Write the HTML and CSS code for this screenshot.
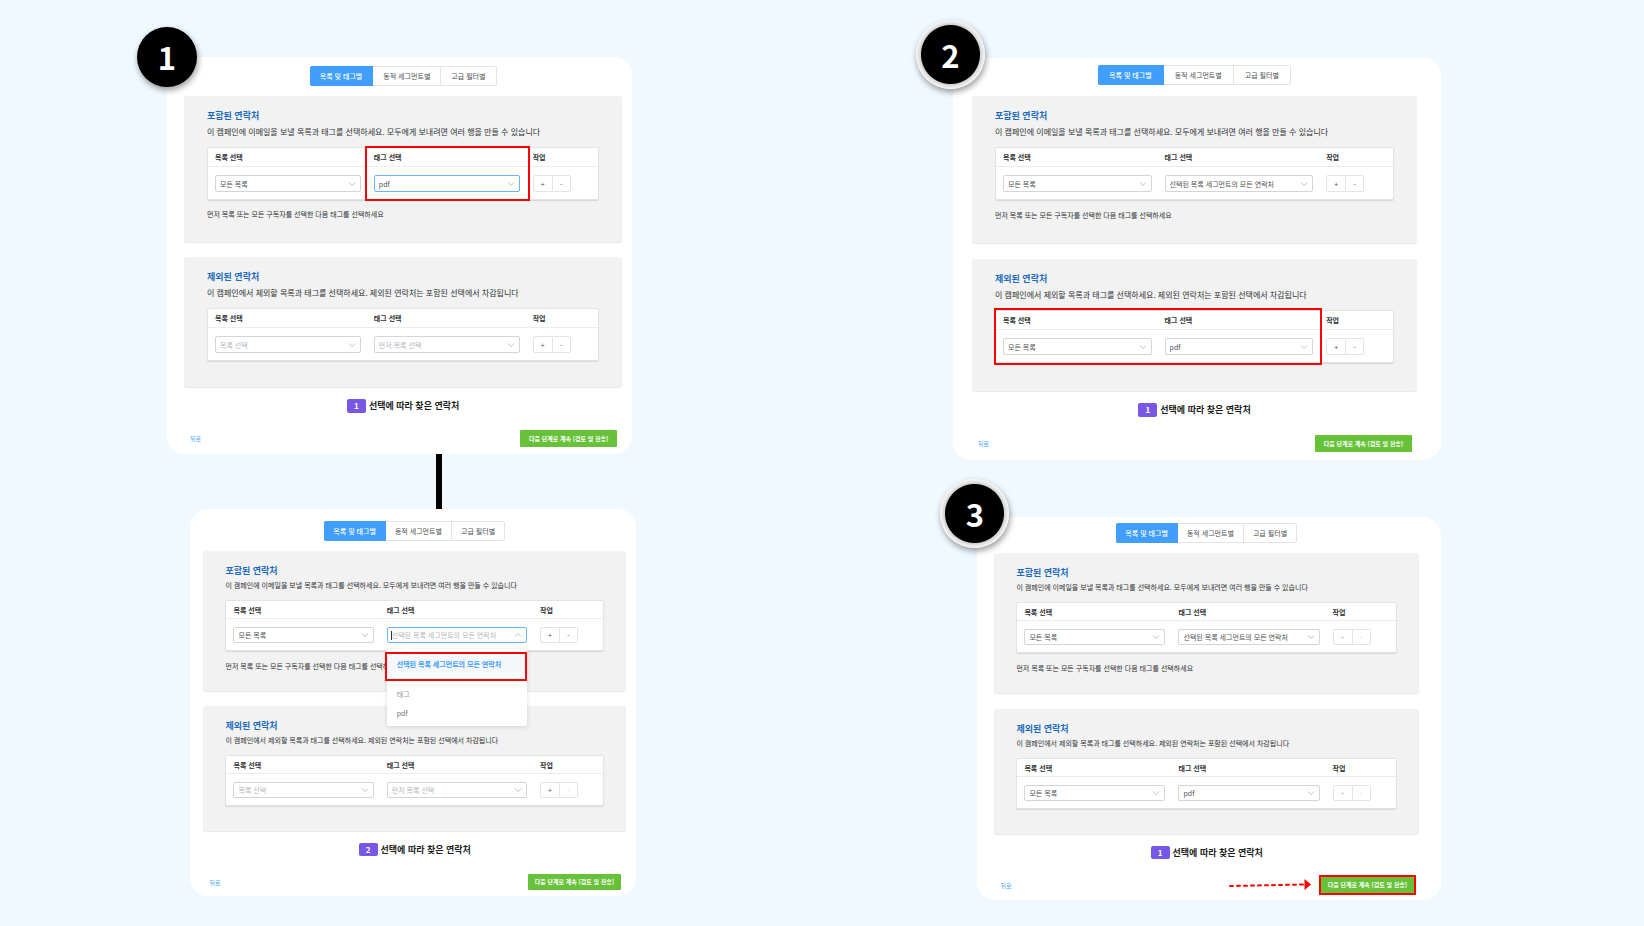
FILE: index.html
```html
<!DOCTYPE html>
<html lang="ko">
<head>
<meta charset="utf-8">
<meta name="viewport" content="width=device-width, initial-scale=1">
<title>연락처 선택 단계</title>
<link rel="stylesheet" href="styles.css">
</head>
<body>
<svg class="defs" aria-hidden="true">
  <symbol id="chev" viewBox="0 0 8 8"><path d="M1 2.500 4 5.500 7 2.500" fill="none" stroke="currentColor" stroke-width="0.8"/></symbol>
</svg>
<main class="board">
  <div class="column column--left">

    <section class="card card--one">
      <div class="step step--plain">1</div>
      <div class="tabs">
        <button class="tab tab--active" type="button">목록 및 태그별</button>
        <button class="tab" type="button">동적 세그먼트별</button>
        <button class="tab" type="button">고급 필터별</button>
      </div>
      <div class="panel">
        <h2 class="panel-title">포함된 연락처</h2>
        <p class="desc">이 캠페인에 이메일을 보낼 목록과 태그를 선택하세요. 모두에게 보내려면 여러 행을 만들 수 있습니다</p>
        <div class="table-wrap">
          <table class="grid">
            <thead><tr><th class="col">목록 선택</th><th class="col">태그 선택</th><th>작업</th></tr></thead>
            <tbody><tr>
              <td><div class="field"><select class="control" aria-label="목록 선택"><option>모든 목록</option></select><svg class="chev"><use href="#chev"/></svg></div></td>
              <td><div class="field"><select class="control control--focus" aria-label="태그 선택"><option>pdf</option></select><svg class="chev"><use href="#chev"/></svg></div></td>
              <td><div class="actions"><button class="act" type="button">+</button><button class="act" type="button">-</button></div></td>
            </tr></tbody>
          </table>
          <div class="mark mark--tag"></div>
        </div>
        <p class="note">먼저 목록 또는 모든 구독자를 선택한 다음 태그를 선택하세요</p>
      </div>
      <div class="panel panel--exclude">
        <h2 class="panel-title">제외된 연락처</h2>
        <p class="desc">이 캠페인에서 제외할 목록과 태그를 선택하세요. 제외된 연락처는 포함된 선택에서 차감됩니다</p>
        <div class="table-wrap">
          <table class="grid">
            <thead><tr><th class="col">목록 선택</th><th class="col">태그 선택</th><th>작업</th></tr></thead>
            <tbody><tr>
              <td><div class="field"><select class="control control--empty" aria-label="목록 선택"><option>목록 선택</option></select><svg class="chev"><use href="#chev"/></svg></div></td>
              <td><div class="field"><select class="control control--empty" aria-label="태그 선택"><option>먼저 목록 선택</option></select><svg class="chev"><use href="#chev"/></svg></div></td>
              <td><div class="actions"><button class="act" type="button">+</button><button class="act" type="button">-</button></div></td>
            </tr></tbody>
          </table>
        </div>
      </div>
      <p class="count"><span class="badge">1</span>선택에 따라 찾은 연락처</p>
      <div class="footer"><a class="back" href="#">뒤로</a><button class="next" type="button">다음 단계로 계속 [검토 및 전송]</button></div>
    </section>

    <div class="connector"></div>

    <section class="card card--compact card--open">
      <div class="tabs">
        <button class="tab tab--active" type="button">목록 및 태그별</button>
        <button class="tab" type="button">동적 세그먼트별</button>
        <button class="tab" type="button">고급 필터별</button>
      </div>
      <div class="panel">
        <h2 class="panel-title">포함된 연락처</h2>
        <p class="desc">이 캠페인에 이메일을 보낼 목록과 태그를 선택하세요. 모두에게 보내려면 여러 행을 만들 수 있습니다</p>
        <div class="table-wrap">
          <table class="grid">
            <thead><tr><th class="col">목록 선택</th><th class="col">태그 선택</th><th>작업</th></tr></thead>
            <tbody><tr>
              <td><div class="field"><select class="control" aria-label="목록 선택"><option>모든 목록</option></select><svg class="chev"><use href="#chev"/></svg></div></td>
              <td>
                <div class="field">
                  <input class="control control--focus" type="text" role="combobox" aria-expanded="true" aria-label="태그 선택" placeholder="선택된 목록 세그먼트의 모든 연락처">
                  <span class="caret"></span>
                  <svg class="chev chev--up"><use href="#chev"/></svg>
                  <div class="menu">
                    <button class="option option--active" type="button">선택된 목록 세그먼트의 모든 연락처</button>
                    <div class="menu-group">태그</div>
                    <button class="option" type="button">pdf</button>
                    <div class="mark mark--option"></div>
                  </div>
                </div>
              </td>
              <td><div class="actions"><button class="act" type="button">+</button><button class="act" type="button">-</button></div></td>
            </tr></tbody>
          </table>
        </div>
        <p class="note">먼저 목록 또는 모든 구독자를 선택한 다음 태그를 선택하세요</p>
      </div>
      <div class="panel panel--exclude">
        <h2 class="panel-title">제외된 연락처</h2>
        <p class="desc">이 캠페인에서 제외할 목록과 태그를 선택하세요. 제외된 연락처는 포함된 선택에서 차감됩니다</p>
        <div class="table-wrap">
          <table class="grid">
            <thead><tr><th class="col">목록 선택</th><th class="col">태그 선택</th><th>작업</th></tr></thead>
            <tbody><tr>
              <td><div class="field"><select class="control control--empty" aria-label="목록 선택"><option>목록 선택</option></select><svg class="chev"><use href="#chev"/></svg></div></td>
              <td><div class="field"><select class="control control--empty" aria-label="태그 선택"><option>먼저 목록 선택</option></select><svg class="chev"><use href="#chev"/></svg></div></td>
              <td><div class="actions"><button class="act" type="button">+</button><button class="act act--faint" type="button">-</button></div></td>
            </tr></tbody>
          </table>
        </div>
      </div>
      <p class="count"><span class="badge">2</span>선택에 따라 찾은 연락처</p>
      <div class="footer"><a class="back" href="#">뒤로</a><button class="next" type="button">다음 단계로 계속 [검토 및 전송]</button></div>
    </section>
  </div>

  <div class="column column--right">
    <section class="card card--two">
      <div class="step">2</div>
      <div class="tabs">
        <button class="tab tab--active" type="button">목록 및 태그별</button>
        <button class="tab" type="button">동적 세그먼트별</button>
        <button class="tab" type="button">고급 필터별</button>
      </div>
      <div class="panel">
        <h2 class="panel-title">포함된 연락처</h2>
        <p class="desc">이 캠페인에 이메일을 보낼 목록과 태그를 선택하세요. 모두에게 보내려면 여러 행을 만들 수 있습니다</p>
        <div class="table-wrap">
          <table class="grid">
            <thead><tr><th class="col">목록 선택</th><th class="col">태그 선택</th><th>작업</th></tr></thead>
            <tbody><tr>
              <td><div class="field"><select class="control" aria-label="목록 선택"><option>모든 목록</option></select><svg class="chev"><use href="#chev"/></svg></div></td>
              <td><div class="field"><select class="control" aria-label="태그 선택"><option>선택된 목록 세그먼트의 모든 연락처</option></select><svg class="chev"><use href="#chev"/></svg></div></td>
              <td><div class="actions"><button class="act" type="button">+</button><button class="act" type="button">-</button></div></td>
            </tr></tbody>
          </table>
        </div>
        <p class="note">먼저 목록 또는 모든 구독자를 선택한 다음 태그를 선택하세요</p>
      </div>
      <div class="panel panel--exclude">
        <h2 class="panel-title">제외된 연락처</h2>
        <p class="desc">이 캠페인에서 제외할 목록과 태그를 선택하세요. 제외된 연락처는 포함된 선택에서 차감됩니다</p>
        <div class="table-wrap">
          <table class="grid">
            <thead><tr><th class="col">목록 선택</th><th class="col">태그 선택</th><th>작업</th></tr></thead>
            <tbody><tr>
              <td><div class="field"><select class="control" aria-label="목록 선택"><option>모든 목록</option></select><svg class="chev"><use href="#chev"/></svg></div></td>
              <td><div class="field"><select class="control" aria-label="태그 선택"><option>pdf</option></select><svg class="chev"><use href="#chev"/></svg></div></td>
              <td><div class="actions"><button class="act" type="button">+</button><button class="act" type="button">-</button></div></td>
            </tr></tbody>
          </table>
          <div class="mark mark--both"></div>
        </div>
      </div>
      <p class="count"><span class="badge">1</span>선택에 따라 찾은 연락처</p>
      <div class="footer"><a class="back" href="#">뒤로</a><button class="next" type="button">다음 단계로 계속 [검토 및 전송]</button></div>
    </section>

    <section class="card card--compact card--three">
      <div class="step">3</div>
      <div class="tabs">
        <button class="tab tab--active" type="button">목록 및 태그별</button>
        <button class="tab" type="button">동적 세그먼트별</button>
        <button class="tab" type="button">고급 필터별</button>
      </div>
      <div class="panel">
        <h2 class="panel-title">포함된 연락처</h2>
        <p class="desc">이 캠페인에 이메일을 보낼 목록과 태그를 선택하세요. 모두에게 보내려면 여러 행을 만들 수 있습니다</p>
        <div class="table-wrap">
          <table class="grid">
            <thead><tr><th class="col">목록 선택</th><th class="col">태그 선택</th><th>작업</th></tr></thead>
            <tbody><tr>
              <td><div class="field"><select class="control" aria-label="목록 선택"><option>모든 목록</option></select><svg class="chev"><use href="#chev"/></svg></div></td>
              <td><div class="field"><select class="control" aria-label="태그 선택"><option>선택된 목록 세그먼트의 모든 연락처</option></select><svg class="chev"><use href="#chev"/></svg></div></td>
              <td><div class="actions"><button class="act act--faint" type="button">+</button><button class="act act--faint" type="button">-</button></div></td>
            </tr></tbody>
          </table>
        </div>
        <p class="note">먼저 목록 또는 모든 구독자를 선택한 다음 태그를 선택하세요</p>
      </div>
      <div class="panel panel--exclude">
        <h2 class="panel-title">제외된 연락처</h2>
        <p class="desc">이 캠페인에서 제외할 목록과 태그를 선택하세요. 제외된 연락처는 포함된 선택에서 차감됩니다</p>
        <div class="table-wrap">
          <table class="grid">
            <thead><tr><th class="col">목록 선택</th><th class="col">태그 선택</th><th>작업</th></tr></thead>
            <tbody><tr>
              <td><div class="field"><select class="control" aria-label="목록 선택"><option>모든 목록</option></select><svg class="chev"><use href="#chev"/></svg></div></td>
              <td><div class="field"><select class="control" aria-label="태그 선택"><option>pdf</option></select><svg class="chev"><use href="#chev"/></svg></div></td>
              <td><div class="actions"><button class="act act--faint" type="button">+</button><button class="act act--faint" type="button">-</button></div></td>
            </tr></tbody>
          </table>
        </div>
      </div>
      <p class="count"><span class="badge">1</span>선택에 따라 찾은 연락처</p>
      <div class="footer">
        <a class="back" href="#">뒤로</a>
        <svg class="arrow" viewBox="0 0 82 12" aria-hidden="true">
          <path d="M1 7 75 5.500" fill="none" stroke="#f00" stroke-width="2" stroke-linecap="round" stroke-dasharray="3 4"/>
          <path d="M75.500 0 82 5.500 75.500 11z" fill="#f00"/>
        </svg>
        <div class="next-wrap"><button class="next" type="button">다음 단계로 계속 [검토 및 전송]</button><div class="mark mark--next"></div></div>
      </div>
    </section>
  </div>
</main>
</body>
</html>
```

FILE: styles.css
```css
* { box-sizing: border-box; }

body {
  margin: 0;
  min-height: 100vh;
  background: #f0f9ff;
  color: #303133;
  font-family: "Noto Sans CJK KR", sans-serif;
  font-size: 7px;
}

h2, p { margin: 0; }
button, select, input { font: inherit; margin: 0; }
.defs { position: absolute; width: 0; height: 0; }

.board {
  display: grid;
  grid-template-columns: 167fr 469fr 317fr 488fr 203fr;
  padding: 57px 0 24px;
}

.column { display: flex; flex-direction: column; min-width: 0; }
.column--left { grid-column: 2; }
.column--right { grid-column: 4; padding-top: 1px; gap: 57px; }

.connector {
  width: 6px;
  height: 55px;
  margin-left: 57.400%;
  background: #000;
}

/* Cards */
.card {
  --title-line: 16px;
  --line: 15px;
  --table-gap: 8px;
  --note-gap: 7px;
  --head: 19px;
  --control: 17px;
  --badge: 14px;
  position: relative;
  display: flex;
  flex-direction: column;
  border-radius: 18px;
  background: #fff;
}
.card--one { width: 99.200%; padding: 9px 10px 7px 17px; }
.card--one .footer { margin-top: 17px; }
.card--two {
  --note-gap: 8px;
  padding: 7px 24px 8px 19px;
}
.card--compact {
  --title-line: 15px;
  --line: 14px;
  --note-gap: 8px;
  --head: 18px;
  --control: 16px;
  --badge: 13px;
  width: 95%;
  align-self: flex-end;
}
.card--open { padding: 12px 10px 6px 13px; }
.card--three { padding: 6px 22px 7px 17px; }

.step {
  position: absolute;
  top: -38px;
  left: -37px;
  width: 69px;
  height: 69px;
  display: grid;
  place-items: center;
  padding-bottom: 1px;
  border-radius: 50%;
  background: radial-gradient(circle closest-side, #000 0 29px, #d2d2d2 30px, #e6e6e6 32px, #f4f4f4 34px);
  box-shadow: 1px 3px 6px rgba(0, 0, 0, 0.4);
  color: #fff;
  font-size: 31px;
  font-weight: 700;
  line-height: 1;
}
.step--plain {
  top: -30px;
  left: -30px;
  width: 60px;
  height: 60px;
  background: #000;
}

/* Tabs */
.tabs { display: flex; justify-content: center; margin-bottom: 10px; }
.card--two .tabs { margin-bottom: 11px; }
.tab {
  height: 20px;
  padding: 0 10px;
  border: 1px solid #e2e4e9;
  border-left: 0;
  background: #fff;
  color: #505256;
  line-height: 18px;
  white-space: nowrap;
}
.card--two .tab { padding: 0 11px; }
.card--compact .tab { padding: 0 9px; }
.tab:last-child { border-radius: 0 2px 2px 0; }
.tab--active {
  border-color: #409eff;
  border-radius: 2px 0 0 2px;
  background: #409eff;
  color: #fff;
  font-weight: 500;
}

/* Panels */
.panel {
  padding: 12px 23px 20px;
  border-radius: 3px;
  background: #f2f2f2;
  box-shadow: 0 1px 1px #e8e8e8;
}
.panel--exclude { margin-top: 15px; padding-bottom: 26px; }
.card--two .panel--exclude { margin-top: 16px; padding-bottom: 28px; }
.card--compact .panel { padding: 12px 22px 18px; }
.card--compact .panel--exclude { padding-bottom: 25px; }
.card--three .panel--exclude { margin-top: 16px; }

.panel-title {
  color: #1c6bbf;
  font-size: 9px;
  font-weight: 700;
  line-height: var(--title-line);
}
.desc { font-size: 8px; line-height: var(--line); white-space: nowrap; }
.card--compact .desc { font-size: 7px; }
.note { margin-top: var(--note-gap); line-height: var(--line); white-space: nowrap; }

/* Table */
.table-wrap { position: relative; margin-top: var(--table-gap); }
.grid {
  width: 100%;
  table-layout: fixed;
  border-collapse: separate;
  border-spacing: 0;
  border: 1px solid #e2e3e6;
  border-radius: 2px;
  background: #fff;
  box-shadow: 0 1px 1px #d8d8d8;
}
.col { width: 40.700%; }
.grid th {
  height: var(--head);
  padding: 0 7px;
  border-bottom: 1px solid #ebeced;
  font-weight: 700;
  line-height: 12px;
  text-align: left;
}
.grid td { padding: 8px 6px 7px 7px; }

.field { position: relative; }
.control {
  display: block;
  width: 100%;
  height: var(--control);
  padding: 0 20px 0 4px;
  border: 1px solid #d3d5db;
  border-radius: 2px;
  outline: 0;
  appearance: none;
  background: #fff;
  color: #505256;
  line-height: 14px;
}
.control--focus { border-color: #6cb4ff; }
.control--empty, .control::placeholder { color: #b4b7be; opacity: 1; }
.chev {
  position: absolute;
  top: 50%;
  right: 5px;
  width: 8px;
  height: 8px;
  margin-top: -4px;
  color: #a9adb5;
  pointer-events: none;
}
.chev--up { transform: rotate(180deg); }
.caret {
  position: absolute;
  top: 4px;
  left: 4px;
  width: 1px;
  height: 9px;
  background: #303133;
}

.actions { display: flex; }
.act {
  width: 20px;
  height: var(--control);
  padding: 0;
  border: 1px solid #e2e4e9;
  border-radius: 2px 0 0 2px;
  background: #fff;
  color: #505256;
  line-height: 14px;
}
.act + .act { width: 18px; border-left: 0; border-radius: 0 2px 2px 0; }
.act--faint { color: #c4c6cb; }

/* Open tag menu */
.menu {
  position: absolute;
  z-index: 5;
  top: 22px;
  left: 0;
  width: 100%;
  padding: 6px 0 4px;
  border-radius: 2px;
  background: #fff;
  box-shadow: 0 1px 5px rgba(0, 0, 0, 0.14);
}
.menu::before {
  content: "";
  position: absolute;
  top: -3px;
  left: 17px;
  width: 6px;
  height: 6px;
  background: #fff;
  transform: rotate(45deg);
}
.option {
  display: block;
  width: 100%;
  height: 18px;
  padding: 0 10px;
  border: 0;
  background: #fff;
  color: #707276;
  line-height: 16px;
  text-align: left;
  white-space: nowrap;
}
.option--active {
  position: relative;
  background: #f5f7fa;
  color: #409eff;
  font-weight: 700;
}
.menu-group { margin-top: 12px; padding: 0 10px; color: #909399; line-height: 19px; }

/* Highlight frames */
.mark { position: absolute; border: 2px solid #f00; pointer-events: none; }
.mark--tag { top: -1px; bottom: -1px; left: 40.400%; width: 42%; }
.mark--both { top: -2px; bottom: -2px; left: -1px; width: 82.300%; }
.mark--option { top: 3px; left: -2px; right: 0; height: 29px; }
.mark--next { inset: -2px; }

/* Summary and footer */
.count {
  display: flex;
  justify-content: center;
  gap: 3px;
  margin-top: 12px;
  color: #1c1e21;
  font-size: 9px;
  font-weight: 700;
  line-height: var(--badge);
}
.badge {
  width: 19px;
  border-radius: 2px;
  background: #7857e6;
  color: #fff;
  font-size: 8px;
  text-align: center;
}
.footer {
  display: flex;
  align-items: center;
  margin-top: 18px;
  padding: 0 5px 0 6px;
  font-size: 6px;
}
.back { margin-right: auto; color: #409eff; text-decoration: none; }
.next {
  display: block;
  height: var(--control);
  padding: 0 9px;
  border: 0;
  border-radius: 1px;
  background: #67c23a;
  color: #fff;
  font-weight: 700;
  line-height: var(--control);
  white-space: nowrap;
}
.card--compact .next { padding: 0 7px; }
.next-wrap { position: relative; }
.arrow { width: 82px; height: 12px; margin-right: 10px; }
```
